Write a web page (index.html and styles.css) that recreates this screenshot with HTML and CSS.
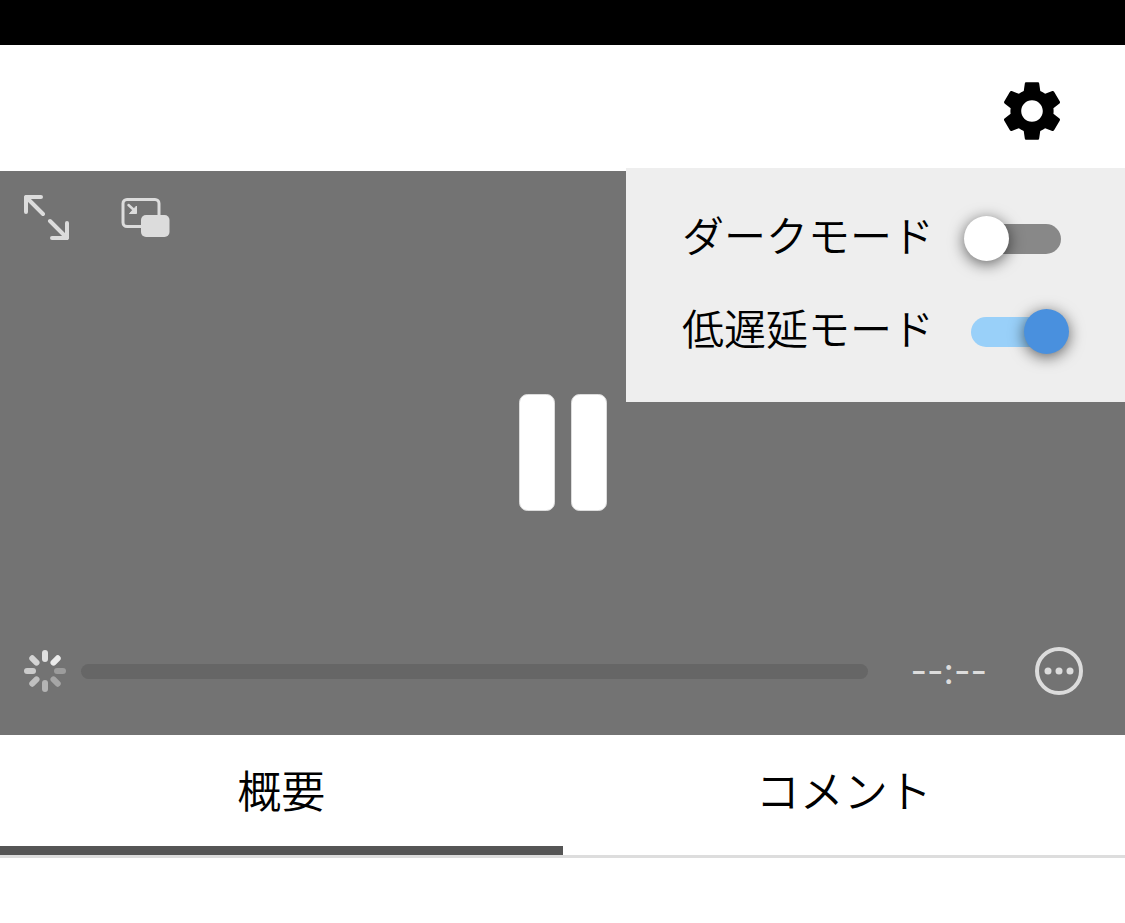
FILE: index.html
```html
<!DOCTYPE html>
<html lang="ja">
<head>
    <meta charset="UTF-8">
    <meta name="viewport" content="width=device-width, initial-scale=1.0">
    <title>ライブ</title>
    <link rel="stylesheet" href="styles.css">
</head>
<body>
    <div class="status-bar"></div>
    <header class="header">
        <button class="icon-btn" type="button" aria-label="設定">
            <svg width="72" height="72" viewBox="0 0 24 24">
                <path d="M19.14 12.94c.04-.3.06-.61.06-.94 0-.32-.02-.64-.07-.94l2.03-1.58c.18-.14.23-.41.12-.61l-1.92-3.32c-.12-.22-.37-.29-.59-.22l-2.39.96c-.5-.38-1.03-.7-1.62-.94l-.36-2.54c-.04-.24-.24-.41-.48-.41h-3.84c-.24 0-.43.17-.47.41l-.36 2.54c-.59.24-1.13.57-1.62.94l-2.39-.96c-.22-.08-.47 0-.59.22L2.74 8.87c-.12.21-.08.47.12.61l2.03 1.58c-.05.3-.09.63-.09.94s.02.64.07.94l-2.03 1.58c-.18.14-.23.41-.12.61l1.92 3.32c.12.22.37.29.59.22l2.39-.96c.5.38 1.03.7 1.62.94l.36 2.54c.05.24.24.41.48.41h3.84c.24 0 .44-.17.47-.41l.36-2.54c.59-.24 1.13-.56 1.62-.94l2.39.96c.22.08.47 0 .59-.22l1.92-3.32c.12-.22.07-.47-.12-.61l-2.01-1.58zM12 15.6c-1.98 0-3.6-1.62-3.6-3.6s1.62-3.6 3.6-3.6 3.6 1.62 3.6 3.6-1.62 3.6-3.6 3.6z"/>
            </svg>
        </button>
        <div class="menu">
            <div class="menu-row">
                <label for="dark">ダークモード</label>
                <input class="switch" type="checkbox" id="dark">
            </div>
            <div class="menu-row">
                <label for="latency">低遅延モード</label>
                <input class="switch" type="checkbox" id="latency" checked>
            </div>
        </div>
    </header>
    <main>
        <section class="player">
            <div class="player-top">
                <button class="icon-btn" type="button" aria-label="全画面">
                    <svg width="46" height="46" viewBox="0 0 46 46" fill="none" stroke="#dcdcdc" stroke-width="4" stroke-linecap="round" stroke-linejoin="round">
                        <path d="M17 2H2V17M2 2L19 19M43 28V43H28M43 43L26 26"/>
                    </svg>
                </button>
                <button class="icon-btn" type="button" aria-label="ピクチャインピクチャ">
                    <svg width="50" height="46" viewBox="0 0 50 46">
                        <rect x="2" y="4.500" width="36" height="27" rx="4" fill="none" stroke="#dcdcdc" stroke-width="3"/>
                        <path d="M7.500 10L13 15" stroke="#dcdcdc" stroke-width="2.500" stroke-linecap="round"/>
                        <path d="M15.500 11V18.500H8.500Z" fill="#dcdcdc" stroke="#dcdcdc" stroke-linejoin="round"/>
                        <rect x="20" y="20" width="28.500" height="22" rx="5" fill="#dcdcdc"/>
                    </svg>
                </button>
            </div>
            <div class="player-center">
                <button class="icon-btn" type="button" aria-label="一時停止">
                    <svg width="88" height="118" viewBox="0 0 88 118" fill="#fff" stroke="#dcdcdc">
                        <rect x="0.500" y="0.500" width="35" height="116" rx="8"/>
                        <rect x="52.500" y="0.500" width="35" height="116" rx="8"/>
                    </svg>
                </button>
            </div>
            <div class="player-bottom">
                <svg width="42" height="42" viewBox="-21 -21 42 42" stroke-width="6" stroke-linecap="round">
                    <path d="M0-18V-12" stroke="#e0e0e0"/>
                    <path d="M0-18V-12" stroke="#ebebeb" transform="rotate(45)"/>
                    <path d="M0-18V-12" stroke="#9c9c9c" transform="rotate(90)"/>
                    <path d="M0-18V-12" stroke="#a6a6a6" transform="rotate(135)"/>
                    <path d="M0-18V-12" stroke="#b4b4b4" transform="rotate(180)"/>
                    <path d="M0-18V-12" stroke="#c0c0c0" transform="rotate(225)"/>
                    <path d="M0-18V-12" stroke="#cbcbcb" transform="rotate(270)"/>
                    <path d="M0-18V-12" stroke="#d4d4d4" transform="rotate(315)"/>
                </svg>
                <div class="seek"></div>
                <span class="time">--:--</span>
                <button class="icon-btn" type="button" aria-label="その他">
                    <svg width="48" height="48" viewBox="0 0 48 48" fill="#dcdcdc">
                        <circle cx="24" cy="24" r="22" fill="none" stroke="#dcdcdc" stroke-width="4"/>
                        <circle cx="13" cy="24" r="3.500"/>
                        <circle cx="24" cy="24" r="3.500"/>
                        <circle cx="35" cy="24" r="3.500"/>
                    </svg>
                </button>
            </div>
        </section>
        <nav class="tabs">
            <a class="tab active" href="#summary">概要</a>
            <a class="tab" href="#comments">コメント</a>
        </nav>
    </main>
</body>
</html>
```
FILE: styles.css
```css
body {
    margin: 0;
    background-color: #fff;
    color: #000;
    font-family: "Noto Sans CJK JP", sans-serif;
    font-weight: 350;
}
svg {
    display: block;
}
.status-bar {
    height: 45px;
    background-color: #000;
}
.header {
    position: relative;
    display: flex;
    justify-content: flex-end;
    padding: 30px 57px 24px;
}
.icon-btn {
    padding: 0;
    border: 0;
    background: none;
    cursor: pointer;
}
.menu {
    position: absolute;
    top: 123px;
    right: 0;
    z-index: 1;
    display: flex;
    flex-direction: column;
    gap: 48px;
    padding: 48px 56px;
    background-color: #eee;
}
.menu-row {
    display: flex;
    align-items: flex-start;
    justify-content: space-between;
    gap: 30px;
    font-size: 42px;
    line-height: 36px;
}
.switch {
    appearance: none;
    position: relative;
    width: 105px;
    height: 45px;
    margin: 0;
    cursor: pointer;
}
.switch::before {
    content: "";
    position: absolute;
    top: 8px;
    left: 7px;
    width: 90px;
    height: 30px;
    border-radius: 15px;
    background-color: #888;
}
.switch::after {
    content: "";
    position: absolute;
    top: 0;
    left: 0;
    width: 45px;
    height: 45px;
    border-radius: 50%;
    background-color: #fff;
    box-shadow: 0 3px 15px rgba(0, 0, 0, 0.6);
}
.switch:checked::before {
    background-color: #99d0f9;
}
.switch:checked::after {
    left: 60px;
    background-color: #4990de;
}
.player {
    box-sizing: border-box;
    display: flex;
    flex-direction: column;
    aspect-ratio: 375 / 188;
    padding: 24px 42px 40px 24px;
    background-color: #737373;
}
.player-top {
    display: flex;
    gap: 51px;
}
.player-center {
    flex: 1;
    display: flex;
    align-items: center;
    justify-content: center;
    padding: 18px 0 0 18px;
}
.player-bottom {
    display: flex;
    align-items: center;
}
.seek {
    flex: 1;
    height: 15px;
    margin: 0 42px 0 15px;
    border-radius: 8px;
    background-color: #666;
}
.time {
    margin-right: 48px;
    color: #dcdcdc;
    font-family: Inter, sans-serif;
    font-size: 36px;
    font-weight: 400;
    line-height: 48px;
}
.tabs {
    display: flex;
    border-bottom: 3px solid #ddd;
}
.tab {
    flex: 1;
    padding: 24px 0 27px;
    border-bottom: 9px solid transparent;
    color: #000;
    font-size: 44px;
    line-height: 60px;
    text-align: center;
    text-decoration: none;
}
.tab.active {
    border-bottom-color: #555;
}
```
